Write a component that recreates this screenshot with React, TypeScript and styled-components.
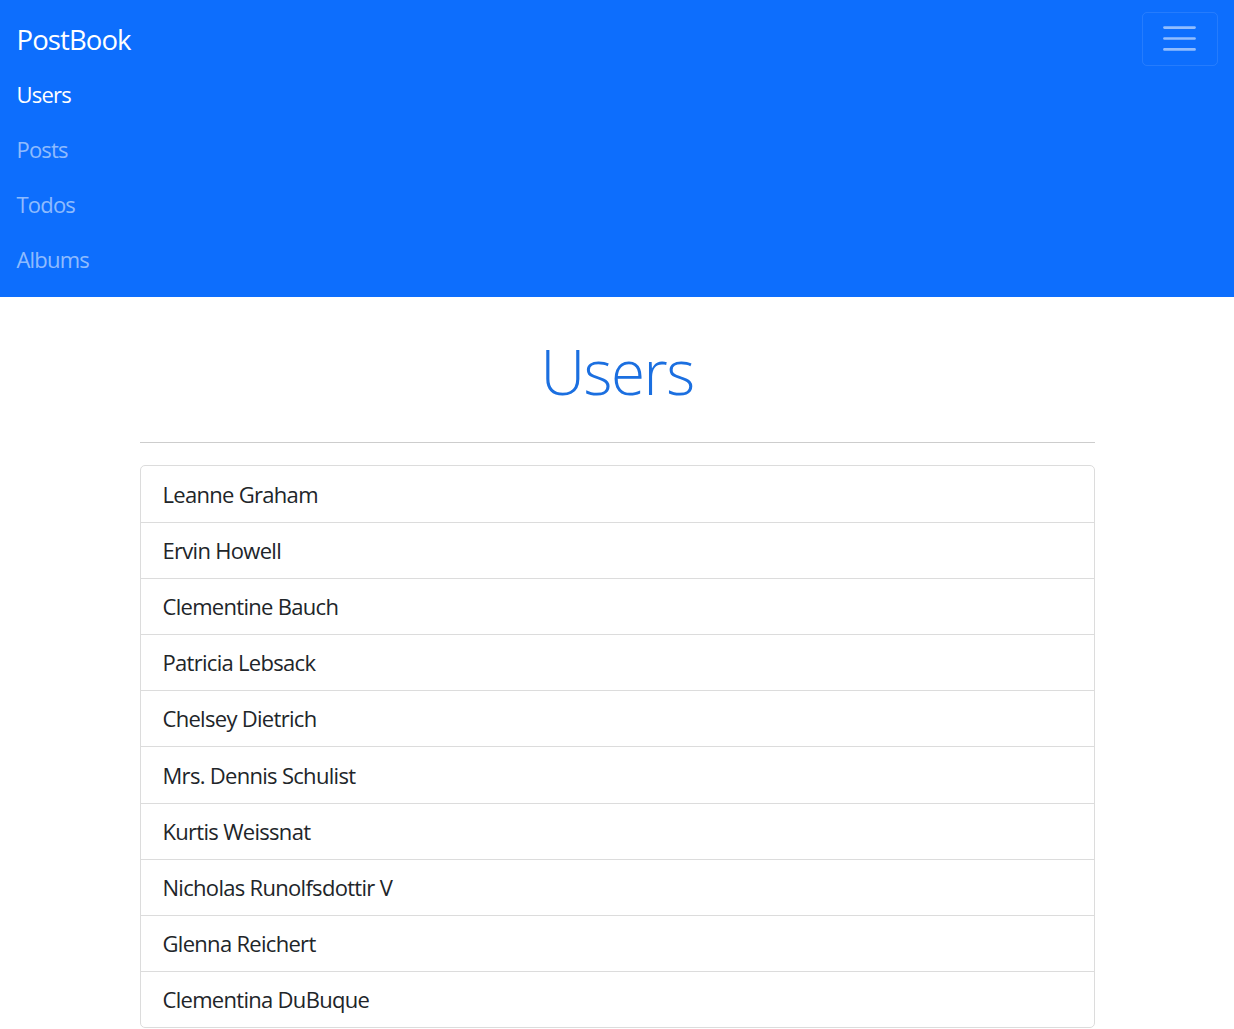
import styled, { createGlobalStyle } from "styled-components";

const GlobalStyle = createGlobalStyle`
  * {
    box-sizing: border-box;
  }
  body {
    margin: 0;
    background: #fff;
    font-family: "Open Sans", "Noto Sans", "Liberation Sans", sans-serif;
    color: #212529;
  }
`;

const Navbar = styled.nav`
  background: #0d6efd;
  padding: 11px 16.5px;
  display: flex;
  flex-wrap: wrap;
  align-items: center;
  justify-content: space-between;
`;

const Brand = styled.a`
  color: #fff;
  font-size: 27.5px;
  line-height: 41.25px;
  letter-spacing: -0.9px;
  padding: 7.5px 0 6.25px;
  text-decoration: none;
`;

const Toggler = styled.button`
  width: 76px;
  height: 54px;
  padding: 5.5px 16.5px;
  background: transparent;
  border: 1px solid rgba(255, 255, 255, 0.1);
  border-radius: 5px;
  display: flex;
  align-items: center;
  justify-content: center;
`;

const NavLinks = styled.ul`
  flex-basis: 100%;
  list-style: none;
  margin: 0;
  padding: 0;
  display: flex;
  flex-direction: column;
`;

const NavLink = styled.a<{ $active?: boolean }>`
  display: block;
  padding: 11.5px 0 10.5px;
  font-size: 22px;
  line-height: 33px;
  letter-spacing: -0.8px;
  text-decoration: none;
  color: ${({ $active }) => ($active ? "#fff" : "rgba(255, 255, 255, 0.55)")};
`;

const Container = styled.main`
  width: 955px;
  margin: 37px auto 0;
`;

const Title = styled.h1`
  margin: 0 0 34px;
  text-align: center;
  font-size: 62px;
  font-weight: 300;
  line-height: 74.4px;
  letter-spacing: -1.5px;
  color: #1b6fe0;
`;

const Divider = styled.hr`
  margin: 22px 0;
  border: 0;
  border-top: 1px solid #cdcdcd;
`;

const UserList = styled.ul`
  list-style: none;
  margin: 0;
  padding: 0;
  border: 1px solid #dcdcdc;
  border-radius: 5px;
  overflow: hidden;
`;

const UserItem = styled.li`
  padding: 11.2px 22px 11px;
  font-size: 22px;
  line-height: 33px;
  letter-spacing: -0.7px;
  color: #212529;
  border-top: 1px solid #dcdcdc;

  &:first-child {
    border-top: 0;
  }
`;

const users = [
  "Leanne Graham",
  "Ervin Howell",
  "Clementine Bauch",
  "Patricia Lebsack",
  "Chelsey Dietrich",
  "Mrs. Dennis Schulist",
  "Kurtis Weissnat",
  "Nicholas Runolfsdottir V",
  "Glenna Reichert",
  "Clementina DuBuque",
];

const links = ["Users", "Posts", "Todos", "Albums"];

export default function App() {
  return (
    <>
      <GlobalStyle />
      <Navbar>
        <Brand href="#">PostBook</Brand>
        <Toggler aria-label="Toggle navigation">
          <svg width="41" height="41" viewBox="0 0 30 30">
            <path
              d="M4 7h22M4 15h22M4 23h22"
              stroke="rgba(255,255,255,0.55)"
              strokeWidth="2"
              strokeLinecap="round"
            />
          </svg>
        </Toggler>
        <NavLinks>
          {links.map((l, i) => (
            <li key={l}>
              <NavLink href="#" $active={i === 0}>
                {l}
              </NavLink>
            </li>
          ))}
        </NavLinks>
      </Navbar>
      <Container>
        <Title>Users</Title>
        <Divider />
        <UserList>
          {users.map((u) => (
            <UserItem key={u}>{u}</UserItem>
          ))}
        </UserList>
      </Container>
    </>
  );
}
